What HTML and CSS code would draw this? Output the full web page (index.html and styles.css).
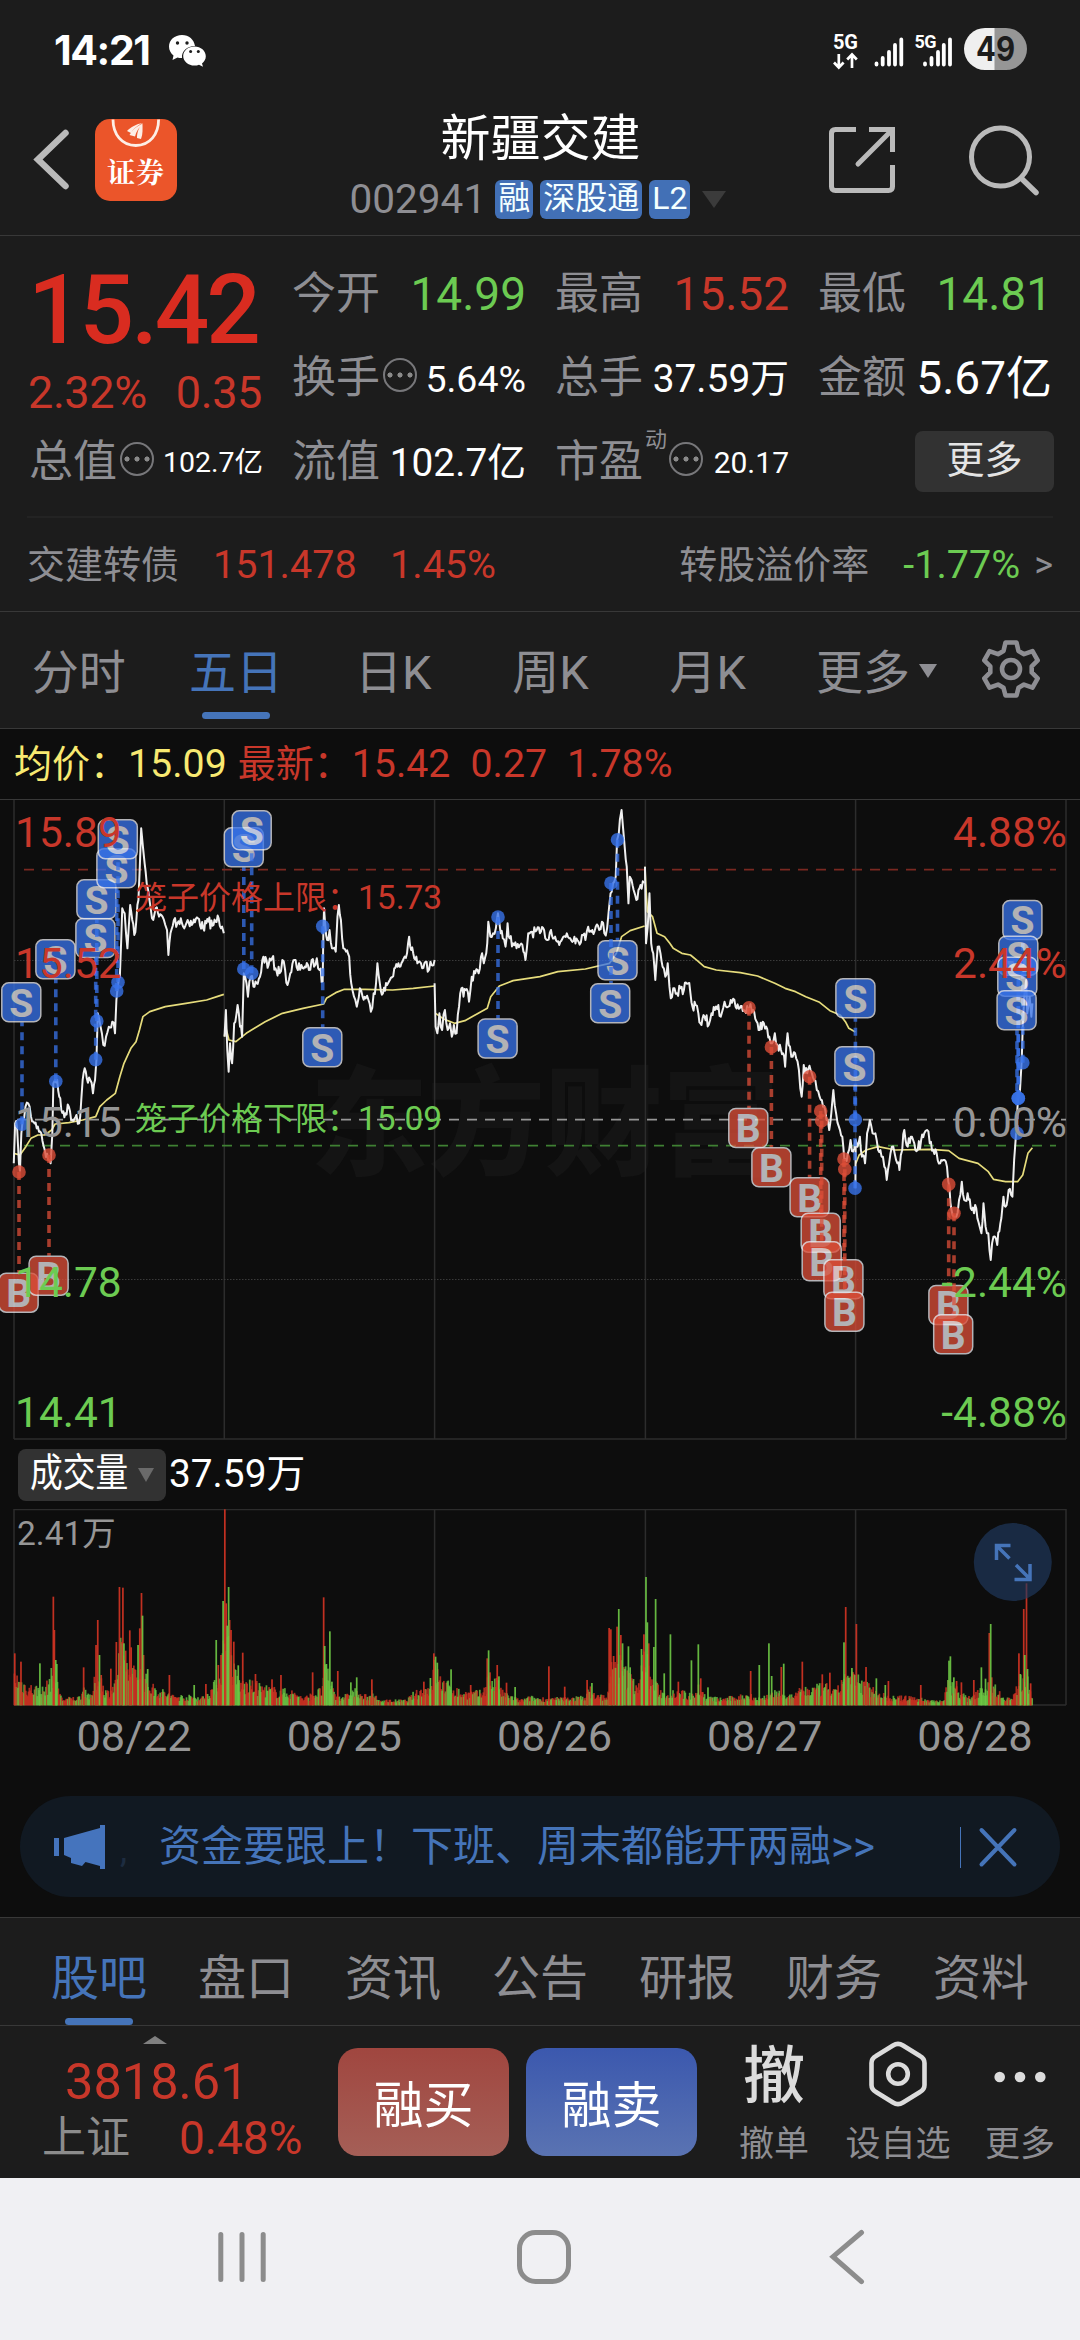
FILE: index.html
```html
<!DOCTYPE html>
<html lang="zh-CN">
<head>
<meta charset="utf-8">
<title>新疆交建 002941</title>
<link rel="stylesheet" href="styles.css">
</head>
<body>
<div class="screen">
  <div class="status">
    <span class="clock">14:21</span>
    <svg class="wechat" viewBox="169 35 38 33" width="38" height="33">
      <path fill="#fff" d="M182 36c-7.500 0-13 5-13 11.500 0 3.700 1.800 6.800 4.500 9L172.500 61l5-2.600c1.500.4 3 .7 4.500.6-.6-7 5-12 13-12-1-6.500-6-11-13-11z"/>
      <path fill="#fff" d="M194.500 47.500c6.300 0 11.300 4.300 11.300 9.700 0 3-1.500 5.500-3.800 7.300l1 3.300-4-2c-1.400.6-3 .8-4.500.8-6.300 0-11.300-4.300-11.300-9.600 0-5.300 5-9.500 11.300-9.500z"/>
      <g fill="#1c1c1c"><circle cx="177.500" cy="44" r="1.700"/><circle cx="187" cy="44" r="1.700"/><circle cx="190.600" cy="52.500" r="1.500"/><circle cx="198.300" cy="52.500" r="1.500"/></g>
    </svg>
    <svg class="signals" viewBox="826 26 208 50" width="208" height="50">
      <g class="net"><text x="833" y="50" font-size="20" textLength="25">5G</text><text x="914.500" y="48.500" font-size="18" textLength="22">5G</text></g>
      <path d="M838.800 55v13M834 63.500l4.800 5 4.800-5M852 69V56M847.200 60.500l4.800-5 4.800 5" stroke="#fff" stroke-width="2.700" fill="none"/>
      <path d="M876.500 64.500v1M882.700 59v6.500M889 53v12.500M895 46v19.500M901.300 40.500v25M925 64.500v1M931.500 59v6.500M938 53v12.500M943.800 46v19.500M950 40.500v25" stroke="#fff" stroke-width="3.800" stroke-linecap="round"/>
      <path fill="#efefef" d="M995 29h-10a21 21 0 0 0 0 42h10z"/><path fill="#969696" d="M994.500 29h11.500a21 21 0 0 1 0 42h-11.500z"/>
      <text class="battery" x="976" y="62" textLength="39" lengthAdjust="spacingAndGlyphs">49</text>
    </svg>
  </div>

  <div class="header">
    <svg class="back" viewBox="30 112 160 96" width="160" height="96">
      <path d="M65.500 133L38 159.500l27.500 26.500" stroke="#bababa" stroke-width="6.500" fill="none" stroke-linecap="round"/>
      <rect x="95" y="119" width="82" height="82" rx="15" fill="#eb552a"/>
      <path d="M113 119.500c0 15 9 26 22.800 26s22.800-11 22.800-26" stroke="#fdeee6" stroke-width="2.800" fill="none"/>
      <path d="M127 131c4-4 9-7 16-8-5 2-10 6-12 10zM129.500 135c3-5 7-9 13.500-11.500-4 4-7 8-8 13zM137 138c0-6 2-11 5.500-14 0 5 .5 10-1.500 15z" fill="#fdeee6"/>
      <text class="appname" x="107" y="183" textLength="57">证券</text>
    </svg>
    <div class="title">
      <div class="name">新疆交建</div>
      <div class="codeline"><span class="code">002941</span><b class="badge">融</b><b class="badge">深股通</b><b class="badge">L2</b><i class="drop"></i></div>
    </div>
    <svg class="actions" viewBox="820 115 230 90" width="230" height="90">
      <g fill="none" stroke="#bababa" stroke-width="5">
        <path d="M856 129.500h-20.500q-4 0-4 4v53q0 4 4 4h53q4 0 4-4V165"/>
        <path d="M869 129.500h23.500V152"/><path d="M858 164l33-33" stroke-linecap="round"/>
        <circle cx="1000.500" cy="157" r="29"/><path d="M1021.500 178.500l14.500 14" stroke-width="5.500" stroke-linecap="round"/>
      </g>
    </svg>
  </div>

  <div class="quote">
    <div class="figures">
      <div class="last"><div class="price">15.42</div><div class="change"><span>2.32%</span><span>0.35</span></div></div>
      <div class="cell"><label>今开</label><span class="v46 green">14.99</span></div>
      <div class="cell"><label>最高</label><span class="v46 red">15.52</span></div>
      <div class="cell"><label>最低</label><span class="v46 green">14.81</span></div>
      <div class="cell"><label>换手</label><i class="dots"></i><span class="v38">5.64%</span></div>
      <div class="cell"><label>总手</label><span class="v40">37.59万</span></div>
      <div class="cell"><label>金额</label><span class="v46">5.67亿</span></div>
      <div class="cell"><label>总值</label><i class="dots"></i><span class="v30">102.7亿</span></div>
      <div class="cell"><label>流值</label><span class="v40">102.7亿</span></div>
      <div class="cell"><label>市盈</label><sup>动</sup><i class="dots"></i><span class="v30 pe">20.17</span></div>
      <div class="cell"><div class="more">更多</div></div>
    </div>
    <div class="bond"><span>交建转债</span><em class="red b1">151.478</em><em class="red b2">1.45%</em><span class="rate">转股溢价率</span><em class="green b3">-1.77%</em><em class="arrow">&gt;</em></div>
  </div>

  <div class="tabs">
    <span>分时</span><span class="on">五日</span><span>日K</span><span>周K</span><span>月K</span><span>更多<i></i></span>
    <svg viewBox="-32 -32 64 64" width="64" height="64" fill="none" stroke="#8e8e93" stroke-width="4.600" stroke-linejoin="round">
      <path d="M-5.500-26.500h11l2 8.500 5.500 3.200 8.500-3 5.200 9.200-6 6v6l6 6-5.200 9.200-8.500-3-5.500 3.200-2 7.700h-11l-2-7.700-5.500-3.200-8.500 3-5.200-9.200 6-6v-6l-6-6 5.200-9.200 8.500 3 5.500-3.200z"/><circle r="9"/>
    </svg>
  </div>

  <div class="info"><span class="yellow">均价：<em>15.09</em></span><span class="red i2">最新：<em>15.42</em></span><em class="red i3">0.27</em><em class="red i4">1.78%</em></div>

  <svg class="chart" viewBox="0 800 1080 640" width="1080" height="640">
    <text class="mark" x="310" y="1166" textLength="470">东方财富</text>
    <path class="grid" d="M14 800V1439M224.300 800V1439M434.600 800V1439M645.400 800V1439M855.600 800V1439M1066 800V1439M14 1439H1066"/>
    <path class="dotted" d="M14 960.500H1066M14 1279.500H1066"/>
    <path class="dash" stroke="#969696" d="M17 1119.700H1066"/>
    <path class="dash" stroke="#7a2821" d="M24 869.700H1056"/>
    <path class="dash" stroke="#3f8033" d="M24 1145.700H1056"/>
    <g id="lines" transform="translate(0 600) scale(.34436 .33333)"></g>
    <g id="trades"></g>
    <g class="axis">
      <text class="fred" x="15" y="847">15.89</text><text class="fred" x="15" y="978">15.52</text><text class="fgray" x="15" y="1137">15.15</text><text class="fgreen" x="15" y="1297">14.78</text><text class="fgreen" x="15" y="1427">14.41</text>
      <g text-anchor="end"><text class="fred" x="1067" y="847">4.88%</text><text class="fred" x="1067" y="978">2.44%</text><text class="fgray" x="1067" y="1137">0.00%</text><text class="fgreen" x="1067" y="1297">-2.44%</text><text class="fgreen" x="1067" y="1427">-4.88%</text></g>
    </g>
    <g class="cage"><text class="fred" x="135" y="909">笼子价格上限：</text><text class="fred" x="358" y="909" font-size="33.500">15.73</text><text class="fgreen" x="135" y="1130">笼子价格下限：</text><text class="fgreen" x="358" y="1130" font-size="33.500">15.09</text></g>
  </svg>

  <div class="volhead"><div class="picker"><span>成交量</span><i></i></div><span class="total">37.59万</span></div>

  <svg class="volume" viewBox="0 1509 1080 197" width="1080" height="197">
    <path class="grid" d="M14 1509.500H1066M14 1509V1705M434.600 1509V1705M645.400 1509V1705M855.600 1509V1705M1066 1509V1705M14 1705H1066"/>
    <text x="17" y="1545" class="volmax">2.41万</text>
    <g id="bars" transform="translate(0 1440) scale(.34436 .33333)"></g>
    <circle cx="1012.800" cy="1562" r="39" fill="#213a61" opacity=".65"/>
    <path d="M996.500 1560v-14.500h14M996.500 1545.500l13 13M1016 1565l14 14M1014.500 1579.500h15.500V1564" fill="none" stroke="#4574b9" stroke-width="3.500"/>
  </svg>
  <div class="dates"><span>08/22</span><span>08/25</span><span>08/26</span><span>08/27</span><span>08/28</span></div>

  <div class="banner">
    <svg viewBox="54 1823 76 48" width="76" height="48" fill="#4574bd"><path d="M54 1838h5v18h-5zM64 1838l36-10v-3h5v44h-5v-3l-14.500-4-3.500 4-11-3v-5l-7-3z"/><text x="120" y="1862" font-size="36" fill="#1d2c40">,</text></svg>
    <span>资金要跟上！下班、周末都能开两融&gt;&gt;</span>
    <svg class="close" viewBox="958 1824 60 44" width="60" height="44" stroke="#4574b9" fill="none"><path d="M960.500 1826v41"/><path d="M981.500 1829l33 34.500M1014.500 1829l-33 34.500" stroke-width="4" stroke-linecap="round"/></svg>
  </div>

  <div class="subtabs"><span class="on">股吧</span><span>盘口</span><span>资讯</span><span>公告</span><span>研报</span><span>财务</span><span>资料</span></div>

  <div class="bar">
    <div class="index"><i></i><div class="point">3818.61</div><div class="idx"><span>上证</span><em>0.48%</em></div></div>
    <div class="btn buy">融买</div><div class="btn sell">融卖</div>
    <div class="tool t1"><div class="ic big">撤</div><div>撤单</div></div>
    <div class="tool t2"><div class="ic"><svg viewBox="-32 -35 64 70" width="64" height="70" fill="none" stroke="#dcdcdc" stroke-width="4.600"><path d="M-5-28.500q5-3.200 10 0L22-18q4.500 2.500 4.500 7v22q0 4.500-4.500 7L5 28.500q-5 3.200-10 0L-22 18q-4.500-2.500-4.500-7v-22q0-4.500 4.500-7z"/><circle r="9.800"/></svg></div><div>设自选</div></div>
    <div class="tool t3"><div class="ic"><svg viewBox="-30 -38 60 70" width="60" height="70" fill="#dcdcdc"><circle cx="-20.300" r="5.300"/><circle r="5.300"/><circle cx="20.300" r="5.300"/></svg></div><div>更多</div></div>
  </div>

  <div class="nav">
    <svg viewBox="0 2178 1080 162" width="1080" height="162" fill="none" stroke="#8c8c8c" stroke-width="5" stroke-linecap="round"><path d="M220.800 2234.500v45M242 2234.500v45M263.200 2234.500v45M861.500 2232.500L833 2256.700l28.500 25"/><rect x="519.500" y="2232.500" width="49" height="49" rx="16"/></svg>
  </div>
</div>
<script src="chart.js"></script>
</body>
</html>
```
FILE: styles.css
```css
* { box-sizing: border-box; }
body { margin: 0; background: #0d0d0d; }
em, i, b, label { font-style: normal; font-weight: 400; }
.screen {
  width: 1080px; height: 2340px; overflow: hidden;
  display: flex; flex-direction: column;
  font-family: Roboto, "Noto Sans CJK SC", sans-serif;
  color: #fff; background: #0d0d0d; line-height: 1; white-space: nowrap;
}
.screen > * { flex: none; }
.red { color: #c8372a; }
.green { color: #6ccb52; }
.yellow { color: #f8e971; }

.status { height: 100px; background: #1c1c1c; display: flex; align-items: center; padding: 0 46px 0 54px; }
.clock { font: 700 41px/1 Inter, sans-serif; letter-spacing: -1.4px; width: 115px; }
.signals { margin-left: auto; }
.net text { font-family: Roboto, sans-serif; font-weight: 700; fill: #fff; }
.battery { font: 700 34px Inter, sans-serif; fill: #1c1c1c; }

.header { height: 136px; background: #1c1c1c; border-bottom: 1px solid #383838; display: flex; align-items: flex-start; padding: 12px 30px 0 30px; }
.appname { font: 700 28px "Noto Serif CJK SC", "Noto Sans CJK SC", serif; fill: #fff; }
.title { width: 630px; display: flex; flex-direction: column; align-items: center; }
.name { font-size: 50px; line-height: 50px; margin: 2px 0 15px 71px; }
.codeline { display: flex; align-items: center; height: 40px; padding-left: 66px; }
.code { font-size: 40.500px; color: #8e8e93; margin-right: 9px; }
.badge { height: 39px; padding: 0 3px; border-radius: 6px; background: #4270b6; font-size: 32px; line-height: 37px; margin-right: 7px; color: #f4ffff; }
.drop { margin-left: 5px; border: 12.5px solid transparent; border-top: 17px solid #3b3b3b; border-bottom: 0; }
.actions { margin-top: 3px; }

.quote { height: 376px; background: #1c1c1c; border-bottom: 1px solid #383838; padding: 16px 27px 0; }
.figures { display: grid; grid-template-columns: repeat(4, 232px); grid-template-rows: repeat(3, 84px); column-gap: 31px; padding-left: 3px; height: 266px; border-bottom: 2px solid #232323; }
.last { grid-row: span 2; padding-left: 1px; }
.price { font-size: 96px; font-weight: 500; line-height: 96px; color: #d92c20; margin: 10px 0 0 -3px; letter-spacing: -3px; }
.change { font-size: 45px; color: #c8372a; display: flex; justify-content: space-between; margin: 12px 0 0 -3px; letter-spacing: -.4px; }
.cell { display: flex; align-items: center; }
.cell label { font-size: 44px; color: #8e8e93; margin-left: -1px; }
.cell span { margin-left: auto; margin-right: -1px; }
.v46 { font-size: 46px; }
.v40 { font-size: 38.800px; padding-top: 3px; }
.v38 { font-size: 37.500px; padding-top: 3px; }
.v30 { font-size: 28.500px; padding-top: 2px; }
.v30.pe { font-size: 30px; }
.dots { width: 34px; height: 34px; border: 2.500px solid #77777a; border-radius: 50%; margin: -6px 0 0 3px; background: radial-gradient(circle, #8a8a8a 2.200px, transparent 2.900px) 0 0 / 10px 100% no-repeat, radial-gradient(circle, #8a8a8a 2.200px, transparent 2.900px) 50% 0 / 10px 100% no-repeat, radial-gradient(circle, #8a8a8a 2.200px, transparent 2.900px) 100% 0 / 10px 100% no-repeat; }
.cell sup { font-size: 22px; color: #8e8e93; align-self: flex-start; margin: 9px -1px 0 2px; line-height: 1; }
.more { margin-left: auto; margin-right: -3px; margin-top: -2px; width: 139px; height: 61px; border-radius: 8px; background: #323232; color: #e4e4e4; font-size: 38px; line-height: 59px; text-align: center; }
.bond { display: flex; align-items: center; height: 93px; font-size: 38px; color: #8e8e93; padding: 1px 0 0 0; }
.bond em { font-size: 39.500px; }
.b1 { margin-left: 34px; width: 177px; }
.rate { margin-left: auto; }
.b3 { margin-left: 34px; }
.bond .arrow { font-size: 36px; margin-left: 14px; }

.tabs { height: 117px; background: #1c1c1c; border-bottom: 1px solid #383838; display: flex; align-items: center; font-size: 47px; color: #8e8e93; }
.tabs span { width: 157.300px; height: 116px; line-height: 121px; text-align: center; position: relative; }
.tabs .on, .subtabs .on { color: #4574b9; }
.on::after { content: ""; position: absolute; left: calc(50% - 34px); bottom: 9px; width: 68px; height: 7px; border-radius: 4px; background: #4574b9; }
.tabs span:last-of-type { width: 180px; padding-left: 0; }
.tabs i { display: inline-block; border: 9px solid transparent; border-top: 14px solid #8e8e93; border-bottom: 0; margin-left: 9px; vertical-align: 11px; }
.tabs svg { margin: -3px 0 0 13px; }

.info { height: 71px; border-bottom: 1px solid #383838; display: flex; align-items: center; padding: 1px 0 0 14px; font-size: 38px; }
.info em { font-size: 39.300px; }
.info .i2 { margin-left: 11px; }
.info .i3 { margin-left: 20px; }
.info .i4 { margin-left: 20px; }

.chart, .volume { display: block; font-family: Roboto, "Noto Sans CJK SC", sans-serif; }
.mark { font-size: 118px; font-weight: 900; fill: #141414; }
.grid { stroke: #2c2c2c; stroke-width: 1.500; fill: none; }
.dotted { stroke: #3a3a3a; stroke-width: 1; stroke-dasharray: 1.500 1.500; }
.dash { stroke-width: 1.700; stroke-dasharray: 10 8; }
.axis { font-size: 42.500px; }
.cage { font-size: 32px; }
.fred { fill: #c8372a; }
.fgreen { fill: #6ccb52; }
.fgray { fill: #969696; }
.volmax { font-size: 33.500px; fill: #969696; }
.price-line, .avg-line { fill: none; vector-effect: non-scaling-stroke; stroke-linejoin: round; }
.price-line { stroke: #f0f0f0; stroke-width: 2; }
.avg-line { stroke: #e6dc7c; stroke-width: 1.700; }
.trade { opacity: .76; }
.trade text { font: 700 39px Roboto, sans-serif; fill: #e6e6ea; text-anchor: middle; }
.S { fill: #3873ea; stroke: #3873ea; }
.B { fill: #dc4e38; stroke: #dc4e38; }
.trade rect { stroke: #e9e9ee; stroke-width: 1.500; }
.trade text { stroke: none; }
.stem { stroke-width: 3.600; stroke-dasharray: 8 6; opacity: .75; }
.dot { stroke: none; opacity: .8; }

.volhead { height: 69px; display: flex; align-items: center; padding: 0 0 0 18px; }
.picker { width: 148px; height: 52px; border-radius: 8px; background: #323232; margin-right: 3px; display: flex; align-items: center; padding-left: 12px; }
.picker span { font-size: 39px; width: 99px; transform: scaleX(.84); transform-origin: 0 50%; margin-top: -3px; }
.picker i { border: 8.500px solid transparent; border-top: 14px solid #6a6a6a; border-bottom: 0; margin-left: 9px; }
.total { font-size: 38.800px; }

.dates { height: 90px; display: flex; padding: 9px 0 0 29px; font-size: 43.300px; color: #969696; }
.dates span { width: 210.300px; text-align: center; }

.banner { height: 101px; margin: 0 20px 20px; border-radius: 51px; background: #111922; display: flex; align-items: center; padding: 0 42px 0 34px; color: #4574b9; font-size: 42px; }
.banner span { margin: 1px 0 0 29px; }
.close { margin-left: auto; }

.subtabs { height: 109px; background: #1c1c1c; border-top: 1px solid #383838; border-bottom: 1px solid #383838; display: flex; gap: 51px; padding-left: 51px; font-size: 48px; color: #8e8e93; }
.subtabs span { width: 96px; line-height: 122px; position: relative; }
.subtabs .on::after { bottom: 0; }

.bar { height: 152px; background: #1c1c1c; display: flex; align-items: flex-start; }
.index { width: 338px; padding-left: 42px; }
.index i { display: block; width: 0; border: 12px solid transparent; border-bottom: 8px solid #808080; border-top: 0; margin: 10px 0 0 101px; }
.point { font-size: 50.500px; color: #c8372a; margin: 13px 0 0 23px; }
.idx { display: flex; align-items: center; font-size: 44px; color: #8c8c8c; margin-top: 7px; }
.idx em { font-size: 46px; color: #c8372a; margin-left: 49px; }
.btn { width: 171px; height: 108px; margin: 22px 17px 0 0; border-radius: 20px; font-size: 50px; line-height: 116px; text-align: center; }
.buy { background: linear-gradient(#a0463f, #a55f57); }
.sell { background: linear-gradient(#3b58ae, #5a73b2); }
.tool { font-size: 35px; color: #8e8e93; text-align: center; display: flex; flex-direction: column; align-items: center; }
.ic { height: 70px; margin: 13px 0 18px; }
.big { font-size: 62px; line-height: 76px; color: #dcdcdc; font-weight: 500; }
.t1 { width: 90px; margin-left: 15px; }
.t2 { width: 110px; margin-left: 24px; }
.t3 { width: 90px; margin-left: 22px; }

.nav { height: 162px; background: #f0f0f3; }
.nav svg { display: block; }
```
FILE: chart.js
```js
const NS = 'http://www.w3.org/2000/svg';
function add(parent, tag, attrs, text) {
  const el = document.createElementNS(NS, tag);
  for (const k in attrs) el.setAttribute(k, attrs[k]);
  if (text) el.textContent = text;
  parent.appendChild(el);
  return el;
}
let seed = 7;
function rnd() { seed = (seed * 16807) % 2147483647; return seed / 2147483647; }
const parse = s => s.trim().split(/\s+/).map(p => p.split(',').map(Number));

// Minute prices, one string for each trading day
const price = [
  '40,1690 44,1570 50,1590 55,1690 58,1712 62,1600 66,1560 74,1520 82,1510 90,1550 100,1570 110,1580 120,1600 130,1650 140,1680 147,1690 152,1600 155,1450 160,1440 166,1440 172,1490 178,1530 190,1540 200,1520 210,1560 222,1545 230,1570 236,1500 240,1440 246,1405 252,1435 262,1440 270,1480 276,1440 280,1380 284,1240 292,1280 300,1335 308,1310 316,1280 326,1265 334,1300 338,1200 342,1160 348,1130 352,1020 355,925 362,940 366,1000 370,1045 378,915 384,960 390,1005 396,960 402,900 406,800 410,685 415,740 420,790 426,850 434,900 445,960 452,925 462,950 472,950 480,975 485,990 489,1065 495,1000 505,960 515,970 525,955 535,985 545,960 560,970 575,955 590,985 605,965 620,975 635,955 645,980 650,1000',
  '652,1310 656,1230 660,1350 664,1415 668,1330 674,1390 680,1270 690,1215 697,1280 703,1310 708,1120 712,1130 720,1190 728,1130 736,1160 745,1150 755,1130 765,1070 780,1095 790,1075 800,1105 812,1120 820,1080 828,1110 835,1155 843,1120 855,1080 865,1110 875,1095 885,1100 897,1110 905,1080 912,1100 920,1075 928,1110 937,1145 939,1000 941,925 950,1020 957,990 964,1045 975,1055 980,950 984,915 990,960 997,1045 1005,1055 1014,1070 1020,1150 1028,1190 1036,1220 1045,1165 1053,1190 1062,1195 1070,1200 1077,1235 1085,1180 1092,1150 1096,1090 1103,1150 1112,1180 1124,1155 1132,1140 1145,1105 1160,1100 1175,1070 1182,1060 1188,1010 1194,1050 1203,1075 1215,1085 1226,1105 1236,1085 1242,1115 1250,1085 1262,1080',
  '1262,1150 1265,1280 1270,1300 1276,1240 1284,1290 1292,1230 1300,1290 1307,1270 1312,1310 1318,1275 1326,1300 1333,1220 1340,1165 1346,1190 1352,1170 1362,1205 1370,1130 1380,1120 1390,1120 1400,1060 1405,1090 1412,1060 1418,965 1424,1010 1432,1000 1440,985 1446,940 1454,1000 1460,1015 1468,1040 1474,970 1480,1015 1490,1030 1500,1045 1510,1035 1520,1055 1526,1080 1534,1000 1545,995 1568,1000 1580,990 1590,1020 1600,990 1612,1010 1624,1035 1636,1010 1646,1000 1656,1015 1668,1010 1680,1025 1690,1005 1700,1020 1708,980 1720,990 1730,980 1740,990 1748,965 1755,1000 1763,985 1768,930 1773,880 1780,850 1788,830 1792,720 1797,700 1800,660 1805,630 1809,680 1814,740 1820,800 1825,910 1829,830 1834,840 1840,870 1848,900 1854,870 1860,855 1870,850',
  '1873,800 1876,1030 1881,980 1886,880 1891,1030 1897,1060 1903,1140 1910,1040 1918,1060 1924,1100 1932,1130 1939,1090 1944,1160 1948,1195 1955,1165 1966,1180 1976,1165 1986,1170 1998,1150 2005,1180 2011,1220 2020,1215 2028,1240 2037,1275 2046,1250 2058,1275 2066,1240 2076,1230 2086,1215 2093,1250 2104,1205 2115,1220 2122,1200 2136,1220 2148,1225 2160,1230 2176,1225 2190,1235 2200,1270 2206,1290 2215,1265 2225,1280 2234,1310 2242,1330 2250,1300 2258,1335 2268,1350 2274,1360 2280,1400 2287,1300 2294,1340 2302,1370 2312,1375 2320,1410 2328,1490 2334,1395 2344,1420 2354,1410 2364,1440 2372,1470 2380,1490 2390,1520 2400,1560 2408,1590 2414,1540 2420,1470 2428,1540 2436,1580 2446,1610 2452,1680 2462,1660 2470,1620 2478,1655 2484,1620',
  '2484,1765 2485,1620 2490,1640 2497,1610 2503,1670 2512,1690 2518,1600 2526,1560 2534,1600 2542,1600 2550,1650 2560,1670 2568,1700 2575,1740 2582,1690 2590,1640 2598,1660 2606,1690 2612,1710 2620,1650 2626,1590 2636,1640 2645,1610 2655,1630 2665,1650 2675,1620 2684,1600 2692,1590 2700,1630 2710,1650 2720,1660 2730,1690 2740,1680 2750,1700 2757,1760 2763,1830 2770,1850 2777,1850 2785,1800 2793,1745 2800,1800 2810,1780 2822,1830 2835,1825 2845,1880 2850,1900 2856,1810 2862,1880 2870,1900 2877,1980 2885,1910 2896,1935 2905,1870 2914,1790 2920,1820 2929,1770 2940,1790 2945,1680 2950,1610 2956,1500 2962,1470 2967,1380 2970,1280 2975,1180 2980,1140 2983,1240 2990,1190 2995,1250 2998,1210'
];
const average = [
  '40,1660 58,1665 75,1640 90,1615 110,1605 130,1605 150,1590 160,1572 200,1568 240,1560 278,1550 290,1520 310,1500 335,1480 348,1430 360,1390 380,1345 395,1325 405,1290 415,1250 435,1235 480,1220 540,1210 600,1200 630,1190 650,1183',
  '652,1310 655,1280 665,1320 685,1325 715,1300 770,1265 820,1240 880,1225 940,1212 948,1195 975,1178 1000,1168 1060,1168 1140,1170 1200,1165 1262,1158',
  '1265,1240 1290,1258 1320,1270 1350,1262 1385,1242 1415,1225 1425,1190 1450,1158 1490,1142 1568,1130 1620,1115 1700,1107 1770,1090 1790,1060 1805,1010 1830,992 1872,978',
  '1873,800 1875,850 1880,935 1895,950 1908,1000 1930,1010 1945,1030 1955,1045 1980,1060 2005,1065 2025,1082 2045,1100 2080,1110 2150,1118 2200,1128 2250,1150 2280,1165 2310,1175 2340,1190 2380,1207 2410,1232 2440,1245 2455,1265 2465,1285 2484,1296',
  '2485,1690 2495,1665 2515,1650 2550,1640 2600,1650 2700,1648 2755,1652 2785,1675 2840,1690 2870,1715 2885,1738 2920,1745 2955,1745 2970,1725 2985,1660 2998,1643'
];
const lines = document.getElementById('lines');
average.forEach(s => add(lines, 'polyline', { class: 'avg-line', points: s }));
price.forEach(s => {
  const p = parse(s), out = [p[0]];
  for (let i = 1; i < p.length; i++) {
    const [x0, y0] = p[i - 1], [x1, y1] = p[i];
    const n = Math.floor((x1 - x0) / 3);
    for (let k = 1; k < n; k++) out.push([x0 + (x1 - x0) * k / n, y0 + (y1 - y0) * k / n + (rnd() - 0.5) * 34]);
    out.push(p[i]);
  }
  add(lines, 'polyline', { class: 'price-line', points: out.map(q => q.join()).join(' ') });
});

// Trades: side, dot x/y, badge x/y
const trades = [
  ['S', 22, 1124.3, 21.3, 1002.3], ['S', 55.8, 1081.3, 55.4, 959.3], ['S', 95.7, 1059.7, 95.4, 938], ['S', 96.8, 1021, 96.4, 899.3],
  ['S', 116.7, 991, 116.4, 868.3], ['S', 118, 982.3, 117.8, 839.3], ['S', 243.8, 969, 243.8, 847.3], ['S', 251.7, 973.3, 251.7, 830.3],
  ['S', 322.7, 926.3, 322.3, 1047.3], ['S', 498, 917, 497.6, 1038.5], ['S', 617.5, 839.7, 617.5, 960.3], ['S', 611, 883, 610.2, 1003.3],
  ['S', 855.4, 1119.7, 855.4, 998.3], ['S', 855, 1188.3, 854.4, 1066.3], ['S', 1022.8, 1062.7, 1022.4, 920], ['S', 1018.3, 1098.3, 1018.3, 955.7],
  ['S', 1018.3, 1098.3, 1017.3, 976.7], ['S', 1017, 1133.3, 1016.6, 1010.3],
  ['B', 19, 1172, 18.6, 1292.7], ['B', 49, 1155, 48.6, 1275.7], ['B', 749, 1007.7, 748.3, 1128], ['B', 771.4, 1047, 771.4, 1167.3],
  ['B', 809.6, 1076.7, 809.6, 1197.3], ['B', 820.7, 1111, 820.7, 1232.7], ['B', 821.7, 1120.7, 821.7, 1261.3], ['B', 844, 1159, 843.4, 1279.3],
  ['B', 844.8, 1169.3, 844.4, 1311.7], ['B', 948.7, 1184.3, 948.4, 1305], ['B', 954, 1213.3, 953.2, 1334.3]
];
const tg = document.getElementById('trades');
trades.forEach(([side, dx, dy, bx, by]) => {
  const edge = by + (by < dy ? 20 : -20);
  add(tg, 'line', { class: side + ' stem', x1: dx, y1: dy, x2: dx, y2: edge });
  add(tg, 'circle', { class: side + ' dot', cx: dx, cy: dy, r: 6.8 });
  const g = add(tg, 'g', { class: 'trade' });
  add(g, 'rect', { class: side, x: bx - 19.5, y: by - 19.5, width: 39, height: 39, rx: 7 });
  add(g, 'text', { x: bx, y: by + 14.3 }, side);
});

// Volume: typical height along the axis, then the single peaks
const level = parse('40,100 80,60 130,50 150,100 175,45 180,20 230,25 245,60 265,20 275,80 290,90 310,40 335,70 350,180 380,100 400,120 420,90 440,60 470,45 500,30 590,25 620,60 640,100 655,250 680,110 700,70 740,65 790,50 860,40 880,20 935,50 945,120 960,70 975,30 1010,30 1030,50 1050,25 1080,40 1100,15 1180,15 1200,35 1250,60 1262,130 1280,80 1310,60 1340,40 1400,40 1420,90 1445,70 1460,40 1510,15 1540,25 1600,20 1690,25 1715,50 1730,30 1765,30 1775,120 1800,140 1825,90 1855,70 1875,180 1890,80 1930,35 1970,50 2000,30 2030,60 2050,25 2100,20 2180,35 2200,20 2250,40 2300,30 2330,50 2400,60 2430,40 2450,100 2480,90 2510,70 2540,50 2580,25 2650,25 2700,15 2740,15 2755,80 2790,40 2810,20 2850,60 2890,60 2910,30 2940,20 2970,100 2990,80 2998,30');
const peaksUp = '43,640 61,665 155,470 158,570 243,682 279,615 284,540 294,705 322,686 338,606 347,441 357,443 365,632 377,571 381,622 406,565 411,459 417,645 492,705 598,732 634,675 642,645 653,208 657,490 667,540 671,570 679,605 705,638 742,702 816,705 790,718 908,697 940,472 981,693 1080,718 1231,725 1260,640 1367,735 1415,655 1423,697 1444,675 1471,728 1594,679 1640,740 1705,720 1769,564 1774,568 1782,648 1792,560 1803,585 1870,583 1884,610 1970,725 2035,715 2180,693 2269,681 2330,665 2388,703 2410,698 2456,501 2487,552 2515,681 2580,723 2674,735 2778,723 2792,727 2828,720 2873,579 2880,712 2959,640 2973,507 2981,430 2993,730';
const peaksDown = '116,670 162,660 165,672 289,645 360,610 401,615 414,527 429,687 564,735 628,600 648,483 660,557 664,441 692,676 943,618 948,672 958,574 964,725 1019,727 1036,712 1250,714 1265,650 1270,668 1310,688 1419,631 1449,709 1496,741 1719,729 1797,507 1808,610 1825,619 1830,682 1863,627 1876,411 1880,547 1899,621 1904,477 1929,700 1947,583 2008,661 2028,613 2056,742 2205,675 2233,610 2241,708 2276,671 2451,607 2474,684 2545,715 2571,735 2756,662 2760,649 2770,712 2850,682 2862,716 2877,552 2963,702 2976,645 2984,687';
const bars = document.getElementById('bars');
const RED = '#d03323', GREEN = '#6cc644';
function bar(x, top, fill, o) { add(bars, 'rect', { x: x - 2.6, y: top, width: 5, height: 796 - top, fill, opacity: o }); }
let j = 0;
for (let x = 42; x < 2998; x += 2.55) {
  while (level[j + 1][0] < x) j++;
  const [x0, h0] = level[j], [x1, h1] = level[j + 1];
  const h = h0 + (h1 - h0) * (x - x0) / (x1 - x0);
  bar(x, 795 - Math.max(8, h * (0.4 + rnd() * 0.75)), rnd() < 0.55 ? RED : GREEN, 0.8);
}
parse(peaksUp).forEach(([x, y]) => bar(x, y, RED, 0.92));
parse(peaksDown).forEach(([x, y]) => bar(x, y, GREEN, 0.92));
```
